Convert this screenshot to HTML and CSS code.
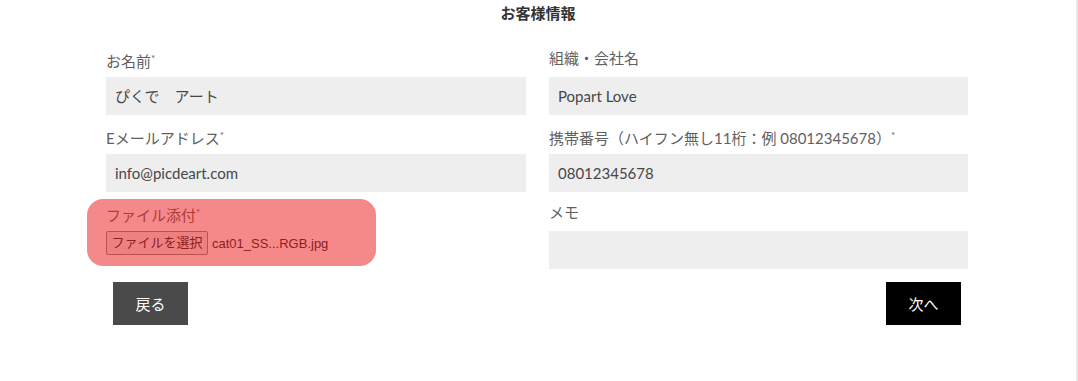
FILE: index.html
```html
<!DOCTYPE html>
<html lang="ja">
<head>
  <meta charset="utf-8">
  <title>お客様情報</title>
  <link rel="stylesheet" href="styles.css">
</head>
<body>
  <div class="page">
    <h2 class="title">お客様情報</h2>

    <form class="customer-form">
      <div class="grid">
        <div class="field">
          <label>お名前<span class="req">*</span></label>
          <div class="input">ぴくで　アート</div>
        </div>
        <div class="field">
          <label>組織・会社名</label>
          <div class="input">Popart Love</div>
        </div>

        <div class="field">
          <label>Eメールアドレス<span class="req">*</span></label>
          <div class="input">info@picdeart.com</div>
        </div>
        <div class="field">
          <label>携帯番号（ハイフン無し11桁：例 08012345678）<span class="req">*</span></label>
          <div class="input">08012345678</div>
        </div>

        <div class="field file-field">
          <label>ファイル添付<span class="req">*</span></label>
          <div class="file-row">
            <span class="file-btn">ファイルを選択</span>
            <span class="file-name">cat01_SS...RGB.jpg</span>
          </div>
          <div class="highlight"></div>
        </div>
        <div class="field">
          <label>メモ</label>
          <div class="input"></div>
        </div>
      </div>

      <div class="actions">
        <button type="button" class="btn btn-back">戻る</button>
        <button type="button" class="btn btn-next">次へ</button>
      </div>
    </form>
  </div>
</body>
</html>
```

FILE: styles.css
```css
body {
  margin: 0;
  padding: 0;
  background-color: #ffffff;
  font-family: "Lato", "Noto Sans CJK JP", sans-serif;
  color: #555555;
}

.page {
  width: 1078px;
  height: 381px;
  box-sizing: border-box;
  border-right: 2px solid #e9e9e9;
}

.title {
  margin: 0;
  height: 26px;
  line-height: 26px;
  font-size: 15px;
  font-weight: bold;
  color: #333333;
  text-align: center;
  margin-bottom: 12px;
}

.customer-form {
  width: 862px;
  margin-left: 106px;
}

.grid {
  display: grid;
  grid-template-columns: 420px 419px;
  column-gap: 23px;
}

.field {
  position: relative;
}

.field label {
  display: block;
  height: 39px;
  line-height: 40px;
  font-size: 15px;
  color: #5f5f5f;
  white-space: nowrap;
}

.req {
  font-size: 10px;
  vertical-align: 5px;
}

.input {
  height: 38px;
  line-height: 38px;
  padding: 0 9px;
  background-color: #eeeeee;
  font-size: 15px;
  color: #474747;
}

.file-row {
  display: flex;
  align-items: center;
  gap: 4px;
  height: 24px;
  font-family: "Liberation Sans", "Noto Sans CJK JP", sans-serif;
  font-size: 13px;
}

.file-btn {
  display: inline-block;
  box-sizing: border-box;
  width: 102px;
  height: 24px;
  line-height: 22px;
  text-align: center;
  background-color: #efefef;
  border: 1px solid #8a8a8a;
  border-radius: 2px;
  color: #222222;
}

.file-name {
  color: #222222;
}

.highlight {
  position: absolute;
  left: -19px;
  top: 7px;
  width: 289px;
  height: 67px;
  border-radius: 16px;
  background-color: rgba(236, 28, 28, 0.52);
}

.actions {
  display: flex;
  justify-content: space-between;
  padding: 0 7px;
  margin-top: 13px;
}

.btn {
  width: 75px;
  height: 43px;
  border: none;
  font-family: "Noto Sans CJK JP", sans-serif;
  font-size: 15px;
  color: #ffffff;
  cursor: pointer;
}

.btn-back {
  background-color: #4a4a4a;
}

.btn-next {
  background-color: #000000;
}
```
